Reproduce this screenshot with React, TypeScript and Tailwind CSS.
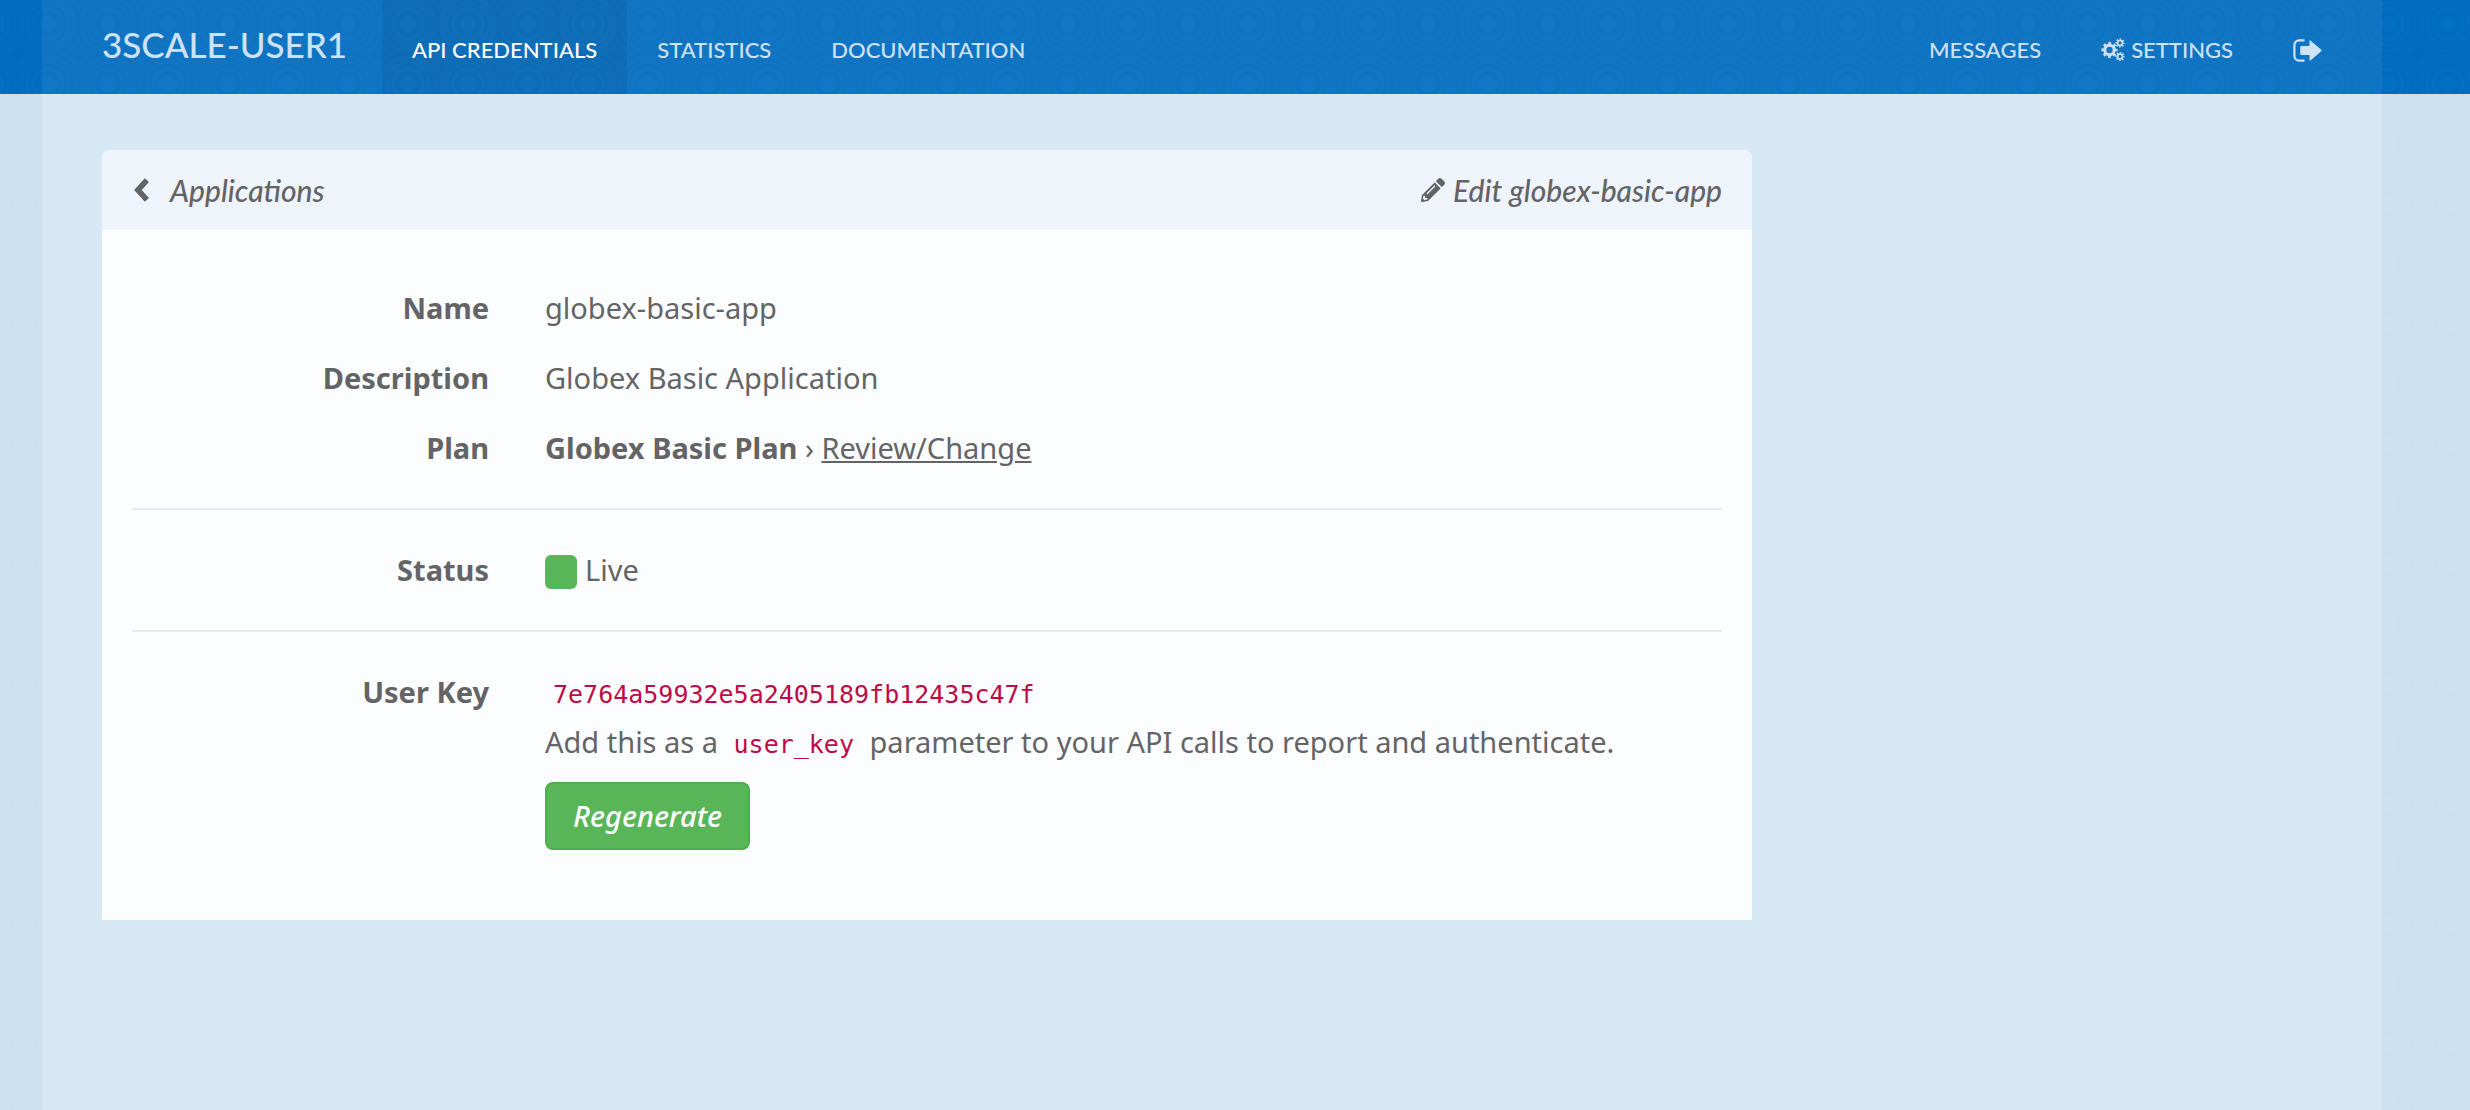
import type { ReactNode } from "react";
import { FaPencilAlt } from "react-icons/fa";

function CogsIcon() {
  return (
    <svg viewBox="0 0 24 24" className="h-6 w-6" fill="none" stroke="currentColor" aria-hidden="true">
      <circle cx="8.5" cy="12" r="4.7" strokeWidth="3" />
      <circle cx="8.5" cy="12" r="6.8" strokeWidth="2.6" strokeDasharray="2.7 2.64" strokeDashoffset="1.35" />
      <circle cx="19" cy="5" r="2.5" strokeWidth="1.6" />
      <circle cx="19" cy="5" r="3.8" strokeWidth="1.6" strokeDasharray="1.6 1.38" strokeDashoffset="0.8" />
      <circle cx="19" cy="18.5" r="2.5" strokeWidth="1.6" />
      <circle cx="19" cy="18.5" r="3.8" strokeWidth="1.6" strokeDasharray="1.6 1.38" strokeDashoffset="0.8" />
    </svg>
  );
}

function LogOutIcon() {
  return (
    <svg viewBox="0 0 29 23" className="h-[23px] w-[29px]" aria-hidden="true">
      <path d="M11.5 1.4H6A4.6 4.6 0 0 0 1.4 6v11A4.6 4.6 0 0 0 6 21.6h5.5" fill="none" stroke="currentColor" strokeWidth="2.2" />
      <path d="M8.5 7H16.5V1.8Q16.5 .6 17.4 1.5L28 10.6Q28.8 11.5 28 12.4L17.4 21.5Q16.5 22.4 16.5 21.2V16H8.5Q7.2 16 7.2 14.7V8.3Q7.2 7 8.5 7Z" fill="currentColor" />
    </svg>
  );
}

function BackIcon() {
  return (
    <svg viewBox="0 0 18 26" className="h-[26px] w-[18px]" aria-hidden="true">
      <path d="M14.9 3.1 5.9 13l9 9.9" fill="none" stroke="currentColor" strokeWidth="5.6" strokeLinejoin="miter" />
    </svg>
  );
}

function NavItem({ children, active, label }: { children: ReactNode; active?: boolean; label?: string }) {
  return (
    <li className="flex">
      <a
        href="#"
        aria-label={label}
        aria-current={active ? "page" : undefined}
        className={
          active
            ? "flex items-center bg-black/6 px-[30px] pt-[6px] text-white"
            : "flex items-center gap-1.5 px-[30px] pt-[6px]"
        }
      >
        {children}
      </a>
    </li>
  );
}

function Row({ term, children }: { term: string; children: ReactNode }) {
  return (
    <div className="flex gap-14">
      <dt className="w-[357px] shrink-0 text-right font-bold">{term}</dt>
      <dd className="min-w-0 flex-1">{children}</dd>
    </div>
  );
}

function Code({ children }: { children: ReactNode }) {
  return (
    <code className="px-2 font-['DejaVu_Sans_Mono',monospace] text-[25px] leading-none text-[#be0b46]">{children}</code>
  );
}

export default function App() {
  return (
    <div className="flex min-h-screen flex-col bg-[#cbe0f1] bg-[radial-gradient(circle_at_center,#cde1f2_8px,#cbe0f1_10px,#cbe0f1_13px,#cde1f2_15px,#cbe0f1_18px,#cde1f2_21px,#cbe0f1_24px,#cde1f2_27px,#cbe0f1_30px,#cce1f2_34px,#cbe0f1_38px)] [background-position:18px_-6px] [background-size:60px_60px] font-['Noto_Sans',sans-serif] text-[29px] leading-10 text-[#646466]">
      <header className="bg-[radial-gradient(circle_at_center,#036fc3_7px,#016bbf_10px,#016cc0_12px,#036fc2_15px,#016bbf_18px,#036ec2_21px,#016bbf_24px,#036ec1_27px,#016bbf_30px,#026dc1_34px,#016bbf_38px)] [background-position:18px_-6px] [background-size:60px_60px] pr-[46px] font-[Lato,sans-serif] text-[22px] font-medium text-[#cfe2f3]">
        <div className="mx-auto flex h-[94px] max-w-[2340px] items-stretch bg-white/6 px-[30px]">
          <a href="#" className="flex w-[310px] items-center px-[30px] pb-[6px] text-[35px] whitespace-nowrap">
            3SCALE-USER1
          </a>
          <nav className="flex flex-1 justify-between">
            <ul className="flex">
              <NavItem active>API CREDENTIALS</NavItem>
              <NavItem>STATISTICS</NavItem>
              <NavItem>DOCUMENTATION</NavItem>
            </ul>
            <ul className="flex">
              <NavItem>MESSAGES</NavItem>
              <NavItem>
                <CogsIcon />
                SETTINGS
              </NavItem>
              <NavItem label="Sign out">
                <LogOutIcon />
              </NavItem>
            </ul>
          </nav>
        </div>
      </header>

      <div className="flex flex-1 flex-col pr-[46px]">
        <main className="mx-auto w-full max-w-[2340px] flex-1 bg-[#d6e8f4] px-[30px] pt-14">
          <div className="w-3/4 px-[30px]">
            <section className="overflow-hidden rounded-t-lg bg-[#fcfdff]">
              <div className="flex h-20 items-center justify-between bg-[#eff4fb] px-[30px] font-[Lato,sans-serif] text-[30px] font-medium italic">
                <a href="#" className="flex items-center gap-5">
                  <BackIcon />
                  Applications
                </a>
                <a href="#" className="flex items-center gap-2">
                  <FaPencilAlt className="h-6 w-6" />
                  Edit globex-basic-app
                </a>
              </div>

              <div className="px-[30px] pt-[58px] pb-[70px]">
                <dl className="flex flex-col gap-[30px]">
                  <Row term="Name">globex-basic-app</Row>
                  <Row term="Description">Globex Basic Application</Row>
                  <Row term="Plan">
                    <strong>Globex Basic Plan</strong> ›{" "}
                    <a href="#" className="underline">
                      Review/Change
                    </a>
                  </Row>
                </dl>
                <hr className="my-10 border-t-2 border-[#e8eaec]" />
                <dl>
                  <Row term="Status">
                    <span className="flex items-center gap-2">
                      <span className="mt-1 h-[34px] w-8 rounded-md bg-[#58b658]" />
                      Live
                    </span>
                  </Row>
                </dl>
                <hr className="my-10 border-t-2 border-[#e8eaec]" />
                <dl>
                  <Row term="User Key">
                    <Code>7e764a59932e5a2405189fb12435c47f</Code>
                    <p className="mt-2.5">
                      Add this as a <Code>user_key</Code> parameter to your API calls to report and authenticate.
                    </p>
                    <button
                      type="button"
                      className="mt-5 flex h-[68px] items-center rounded-lg border-2 border-[#4cae4c] bg-[#58b658] px-[26px] font-medium text-white italic"
                    >
                      Regenerate
                    </button>
                  </Row>
                </dl>
              </div>
            </section>
          </div>
        </main>
      </div>
    </div>
  );
}
